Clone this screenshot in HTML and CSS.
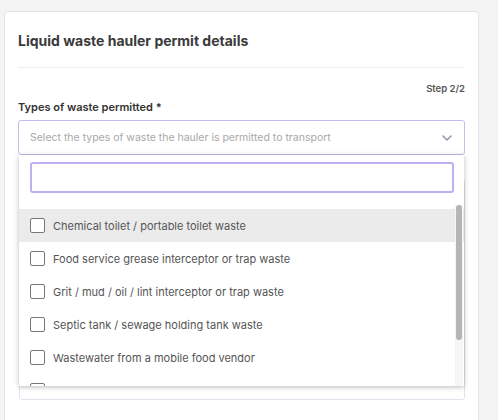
FILE: index.html
```html
<!DOCTYPE html>
<html lang="en">
<head>
  <meta charset="UTF-8">
  <meta name="viewport" content="width=device-width, initial-scale=1.0">
  <title>Liquid waste hauler permit details</title>
  <link rel="stylesheet" href="styles.css">
</head>
<body>
  <div class="card">
    <div class="card-header">Liquid waste hauler permit details</div>

    <div class="step">Step 2/2</div>

    <label class="label">Types of waste permitted *</label>
    <div class="field">
      <div class="select">
        <span class="placeholder">Select the types of waste the hauler is permitted to transport</span>
        <svg class="chevron" width="10" height="6" viewBox="0 0 10 6">
          <path d="M1 1l4 4 4-4" fill="none" stroke="#9a94b0" stroke-width="1.6" stroke-linecap="round" stroke-linejoin="round"/>
        </svg>
      </div>

      <div class="dropdown">
        <input class="search" type="text">
        <ul class="options">
          <li class="active"><span class="box"></span>Chemical toilet / portable toilet waste</li>
          <li><span class="box"></span>Food service grease interceptor or trap waste</li>
          <li><span class="box"></span>Grit / mud / oil / lint interceptor or trap waste</li>
          <li><span class="box"></span>Septic tank / sewage holding tank waste</li>
          <li><span class="box"></span>Wastewater from a mobile food vendor</li>
          <li><span class="box"></span></li>
        </ul>
        <div class="scrollbar"><div class="thumb"></div></div>
      </div>
    </div>

    <div class="notes"></div>
  </div>
</body>
</html>
```

FILE: styles.css
```css
body {
  margin: 0;
  background: #f4f4f4;
  font-family: Inter, 'Liberation Sans', sans-serif;
  color: #333;
  overflow: hidden;
}
.card {
  margin: 11px 0 0 4px;
  width: 447px;
  height: 440px;
  background: #fff;
  border: 1px solid #e4e4e4;
  border-radius: 4px;
  padding: 0 13px 0 13px;
}
.card-header {
  font-size: 14px;
  font-weight: 700;
  line-height: 20px;
  color: #3a3a3a;
  padding: 19px 0 16px;
  border-bottom: 1px solid #efefef;
}
.step {
  margin-top: 14px;
  text-align: right;
  font-size: 9.5px;
  font-weight: 600;
  line-height: 14px;
  color: #555;
}
.label {
  display: block;
  margin-top: 4px;
  font-size: 11px;
  font-weight: 600;
  line-height: 14px;
  color: #333;
}
.field {
  position: relative;
  margin-top: 6px;
}
.select {
  height: 33px;
  border: 1px solid #c9b9f0;
  border-radius: 3px;
  display: flex;
  align-items: center;
  justify-content: space-between;
  padding: 0 12px 0 11px;
}
.placeholder {
  font-size: 10.5px;
  color: #a8a8a8;
}
.chevron {
  margin-top: 1px;
}
.dropdown {
  position: absolute;
  top: 35px;
  left: 1px;
  right: 1px;
  height: 231px;
  background: #fff;
  box-shadow: 0 1px 5px rgba(0, 0, 0, 0.28);
  overflow: hidden;
  z-index: 2;
}
.search {
  display: block;
  box-sizing: border-box;
  margin: 7px 10px 0 11px;
  width: calc(100% - 21px);
  height: 31px;
  border: 2px solid #c2aef2;
  border-radius: 3px;
  outline: none;
}
.options {
  list-style: none;
  margin: 16px 0 0;
  padding: 0;
}
.options li {
  height: 33px;
  display: flex;
  align-items: center;
  padding-left: 11px;
  font-size: 11px;
  color: #555;
}
.options li.active {
  background: #ebebeb;
}
.box {
  width: 13px;
  height: 13px;
  border: 1.5px solid #777;
  border-radius: 2px;
  margin-right: 8px;
  background: #fff;
}
.scrollbar {
  position: absolute;
  top: 50px;
  right: 1px;
  width: 8px;
  bottom: 0;
  background: #f6f6f6;
}
.thumb {
  margin-left: 1px;
  width: 6px;
  height: 135px;
  background: #b5b5b5;
  border-radius: 3px;
}
.notes {
  margin-top: 24px;
  margin-left: 1px;
  height: 221px;
  border: 1px solid #e3e3ee;
  border-radius: 3px;
  box-sizing: border-box;
}
```
